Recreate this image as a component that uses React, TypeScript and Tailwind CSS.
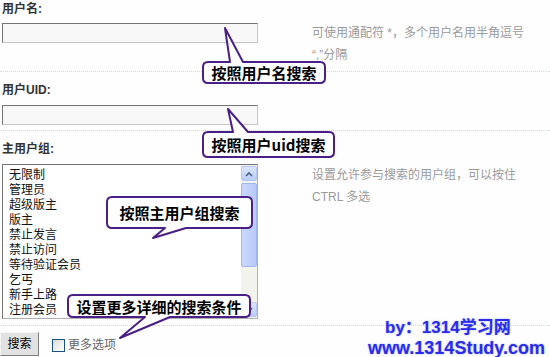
import React from "react";

type CalloutProps = {
  x: number;
  y: number;
  w: number;
  h: number;
  side: "top" | "bottom";
  b1: number;
  b2: number;
  tx: number;
  ty: number;
};

function calloutPath(c: CalloutProps) {
  const { x, y, w, h, side, b1, b2, tx, ty } = c;
  const r = 5;
  const top =
    side === "top"
      ? `M ${x + r} ${y} L ${b1} ${y} L ${tx} ${ty} L ${b2} ${y} L ${x + w - r} ${y}`
      : `M ${x + r} ${y} L ${x + w - r} ${y}`;
  const right = `Q ${x + w} ${y} ${x + w} ${y + r} L ${x + w} ${y + h - r} Q ${x + w} ${y + h} ${x + w - r} ${y + h}`;
  const bottom =
    side === "bottom"
      ? `L ${b2} ${y + h} L ${tx} ${ty} L ${b1} ${y + h} L ${x + r} ${y + h}`
      : `L ${x + r} ${y + h}`;
  const left = `Q ${x} ${y + h} ${x} ${y + h - r} L ${x} ${y + r} Q ${x} ${y} ${x + r} ${y} Z`;
  return `${top} ${right} ${bottom} ${left}`;
}

const callouts: (CalloutProps & { text: string })[] = [
  { x: 203, y: 62, w: 122, h: 21, side: "top", b1: 230, b2: 243, tx: 225, ty: 28, text: "按照用户名搜索" },
  { x: 203, y: 132, w: 131, h: 25, side: "top", b1: 233, b2: 248, tx: 228, ty: 109, text: "按照用户uid搜索" },
  { x: 107, y: 197, w: 145, h: 31, side: "bottom", b1: 165, b2: 186, tx: 153, ty: 238, text: "按照主用户组搜索" },
  { x: 68, y: 295, w: 182, h: 22, side: "bottom", b1: 145, b2: 170, tx: 120, ty: 338, text: "设置更多详细的搜索条件" },
];

const groups = ["无限制", "管理员", "超级版主", "版主", "禁止发言", "禁止访问", "等待验证会员", "乞丐", "新手上路", "注册会员"];

function TextInput() {
  return (
    <div className="ml-[2px] h-[20px] w-[256px] shrink-0 border border-t-[#747474] border-l-[#747474] border-r-[#c6c6c6] border-b-[#c6c6c6] bg-[#f8f8f8]" />
  );
}

export default function App() {
  return (
    <div className="relative h-[357px] w-[550px] overflow-hidden bg-[#fefeff] font-['Liberation_Sans','Noto_Sans_CJK_SC',sans-serif] text-[12px]">
      {/* 用户名 */}
      <div className="box-border h-[72px] border-b border-dotted border-[#c6dcf0]">
        <div className="pl-[2px] pt-[2px] text-[12px] font-bold leading-[14px] text-[#333]">用户名:</div>
        <div className="mt-[7px] flex items-start">
          <TextInput />
          <div className="-mt-px ml-[54px] text-[12px] leading-[22px] text-[#9a9a9a]">
            可使用通配符 *，多个用户名用半角逗号
            <br />
            “,”分隔
          </div>
        </div>
      </div>

      {/* 用户UID */}
      <div className="box-border h-[59px] border-b border-dotted border-[#c6dcf0]">
        <div className="pl-[2px] pt-[11px] text-[12px] font-bold leading-[14px] text-[#333]">用户UID:</div>
        <div className="mt-[8px] flex items-start">
          <TextInput />
        </div>
      </div>

      {/* 主用户组 */}
      <div className="box-border h-[195px] border-b border-dotted border-[#c6dcf0]">
        <div className="pl-[2px] pt-[11px] text-[12px] font-bold leading-[14px] text-[#333]">主用户组:</div>
        <div className="mt-[8px] flex items-start">
          <div className="ml-[2px] flex h-[155px] w-[256px] shrink-0 border border-t-[#747474] border-l-[#747474] border-r-[#b0b0b0] border-b-[#b0b0b0] bg-white">
            <div className="flex-1 pl-[6px] pt-[3px] text-[12px] leading-[15px] text-[#111]">
              {groups.map((g) => (
                <div key={g}>{g}</div>
              ))}
            </div>
            <div className="flex w-[16px] flex-col bg-[#f3f3ee] py-px">
              <div className="flex h-[15px] items-center justify-center rounded-[2px] border border-[#b5c8f3] bg-gradient-to-b from-[#dce6fd] to-[#b9cdf8]">
                <svg width="8" height="6" viewBox="0 0 8 6">
                  <path d="M1 5 L4 2 L7 5" stroke="#4d6185" strokeWidth="1.6" fill="none" />
                </svg>
              </div>
              <div className="mt-[2px] h-[84px] rounded-[2px] border border-[#9fb6ee] bg-gradient-to-r from-[#c9d8fd] to-[#b8cbf8]" />
              <div className="flex-1" />
              <div className="flex h-[15px] items-center justify-center rounded-[2px] border border-[#b5c8f3] bg-gradient-to-b from-[#dce6fd] to-[#b9cdf8]">
                <svg width="8" height="6" viewBox="0 0 8 6">
                  <path d="M1 1 L4 4 L7 1" stroke="#4d6185" strokeWidth="1.6" fill="none" />
                </svg>
              </div>
            </div>
          </div>
          <div className="ml-[54px] text-[12px] leading-[22px] text-[#9a9a9a]">
            设置允许参与搜索的用户组，可以按住
            <br />
            CTRL 多选
          </div>
        </div>
      </div>

      {/* buttons */}
      <div className="flex items-center pt-[6px]">
        <div className="flex h-[24px] w-[39px] items-center justify-center border border-t-[#f4f4f4] border-l-[#f4f4f4] border-r-[#7e7e7e] border-b-[#7e7e7e] bg-[#e2e2e2] text-[12px] text-black">
          搜索
        </div>
        <div className="ml-[13px] mt-[2px] h-[13px] w-[13px] border border-[#1c5180] bg-gradient-to-br from-[#dcdcd6] to-[#ffffff]" />
        <span className="ml-[3px] mt-[2px] text-[12px] text-[#666]">更多选项</span>
      </div>

      {/* callouts */}
      <svg className="pointer-events-none absolute left-0 top-0" width="550" height="357" viewBox="0 0 550 357">
        {callouts.map((c, i) => (
          <path key={i} d={calloutPath(c)} fill="#ffffff" stroke="#4a1f86" strokeWidth="2" strokeLinejoin="round" />
        ))}
      </svg>
      {callouts.map((c, i) => (
        <div
          key={i}
          className="absolute flex items-center justify-center font-['Noto_Sans_CJK_SC','Liberation_Sans',sans-serif] text-[15px] font-bold leading-none text-black"
          style={{ left: c.x, top: c.y, width: c.w, height: c.h }}
        >
          {c.text}
        </div>
      ))}

      {/* watermark */}
      <div className="absolute left-[385px] top-[318px] whitespace-nowrap font-['Liberation_Sans','Noto_Sans_CJK_SC',sans-serif] text-[17px] font-bold leading-[20px] text-[#2b2bea] [text-shadow:0_0_2px_#9aa8ff]">
        by：1314学习网
      </div>
      <div className="absolute left-[368px] top-[339px] whitespace-nowrap font-['Liberation_Sans',sans-serif] text-[18px] font-bold leading-[18px] text-[#2b2bea] [text-shadow:0_0_2px_#9aa8ff]">
        www.1314Study.com
      </div>
    </div>
  );
}
